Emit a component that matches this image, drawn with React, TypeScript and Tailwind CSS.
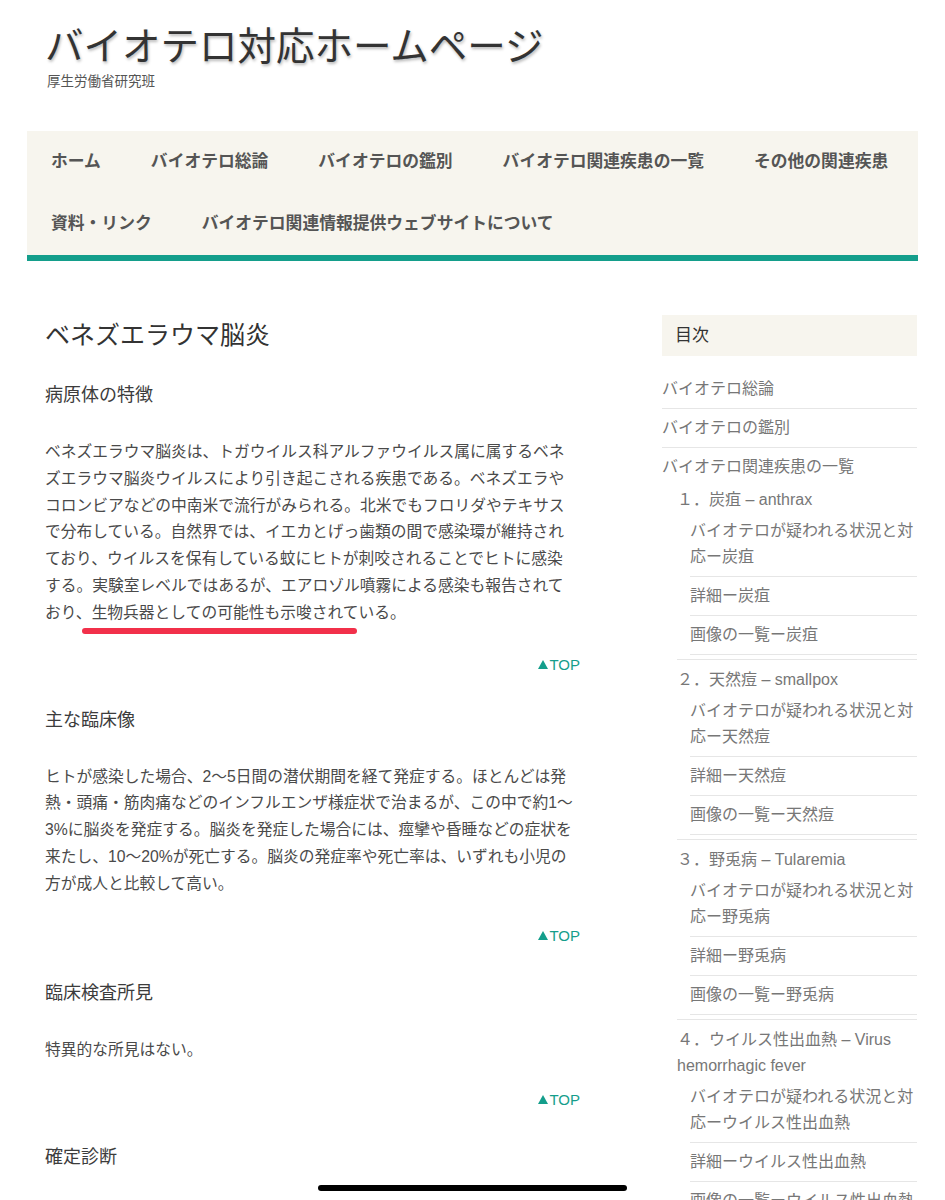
import React from "react";

const FONT = "font-['Liberation_Sans','Noto_Sans_CJK_JP',sans-serif]";

const NAV = [
  "ホーム",
  "バイオテロ総論",
  "バイオテロの鑑別",
  "バイオテロ関連疾患の一覧",
  "その他の関連疾患",
  "資料・リンク",
  "バイオテロ関連情報提供ウェブサイトについて",
];

const DISEASES = [
  { label: "１．炭疽 – anthrax", name: "炭疽" },
  { label: "２．天然痘 – smallpox", name: "天然痘" },
  { label: "３．野兎病 – Tularemia", name: "野兎病" },
  { label: "４．ウイルス性出血熱 – Virus hemorrhagic fever", name: "ウイルス性出血熱" },
  { label: "５．ボツリヌス症 – Botulism", name: "ボツリヌス症" },
  { label: "６．ペスト – Plague", name: "ペスト" },
];

const TopLink = ({ mt = "mt-[26px]" }: { mt?: string }) => (
  <div className={`${mt} flex justify-end text-[15px] leading-[24px] text-[#149e8b]`}>
    <a href="#top" className="flex items-center gap-[1px]">
      <svg width="10" height="9" viewBox="0 0 10 9" className="mb-[1px]">
        <polygon points="5,0 10,9 0,9" fill="#149e8b" />
      </svg>
      TOP
    </a>
  </div>
);

const H2 = ({ children, mt = "mt-[30px]" }: { children: React.ReactNode; mt?: string }) => (
  <h2 className={`${mt} text-[18px] leading-[28px] text-[#3c3c3c]`}>{children}</h2>
);

const P = ({ children }: { children: React.ReactNode }) => (
  <p className="mt-[30px] text-[15.75px] leading-[26.8px] text-[#4a4a4a]">{children}</p>
);

function Sidebar() {
  const item = "py-[6px] leading-[26px] border-b border-[#e6e6e6]";
  return (
    <aside className="w-[255px] shrink-0">
      <div className="bg-[#f7f5ee] h-[41px] pl-[13px] text-[17px] leading-[41px] text-[#333]">目次</div>
      <ul className="mt-[14px] text-[16px] text-[#777]">
        <li className={item}>バイオテロ総論</li>
        <li className={item}>バイオテロの鑑別</li>
        <li className={item}>
          バイオテロ関連疾患の一覧
          <ul className="pl-[15px]">
            {DISEASES.map((d) => (
              <li key={d.name} className="pt-[7px] pb-[4px] leading-[26px] border-b border-[#e6e6e6]">
                {d.label}
                <ul className="pl-[13px]">
                  <li className="pt-[5px] pb-[6px] leading-[26px] border-b border-[#e6e6e6]">
                    バイオテロが疑われる状況と対応ー{d.name}
                  </li>
                  <li className={item}>詳細ー{d.name}</li>
                  <li className={item}>画像の一覧ー{d.name}</li>
                </ul>
              </li>
            ))}
          </ul>
        </li>
        <li className={item}>その他の関連疾患</li>
      </ul>
    </aside>
  );
}

export default function App() {
  return (
    <div id="top" className={`${FONT} relative h-[1200px] overflow-hidden bg-white`}>
      <header className="pt-[24px] pl-[45px]">
        <h1 className="text-[38.5px] leading-[46px] text-[#333] [text-shadow:1px_2px_3px_rgba(0,0,0,0.28)]">
          バイオテロ対応ホームページ
        </h1>
        <p className="mt-[2px] pl-[2px] text-[13.5px] leading-[20px] text-[#555]">厚生労働省研究班</p>
      </header>

      <nav className="mx-[27px] mt-[39px] bg-[#f7f5ee] border-b-[6px] border-[#149e8b]">
        <ul className="-ml-[1px] flex flex-wrap">
          {NAV.map((n) => (
            <li key={n} className="px-[25px] py-[18px] text-[16.8px] leading-[26px] font-bold text-[#555]">
              {n}
            </li>
          ))}
        </ul>
      </nav>

      <div className="mt-[54px] flex pl-[45px] pr-[28px]">
        <main className="w-[535px] pt-[2px]">
          <h1 className="text-[25px] leading-[36px] text-[#333]">ベネズエラウマ脳炎</h1>

          <H2 mt="mt-[28px]">病原体の特徴</H2>
          <P>
            ベネズエラウマ脳炎は、トガウイルス科アルファウイルス属に属するベネ<br />
            ズエラウマ脳炎ウイルスにより引き起こされる疾患である。ベネズエラや<br />
            コロンビアなどの中南米で流行がみられる。北米でもフロリダやテキサス<br />
            で分布している。自然界では、イエカとげっ歯類の間で感染環が維持され<br />
            ており、ウイルスを保有している蚊にヒトが刺咬されることでヒトに感染<br />
            する。実験室レベルではあるが、エアロゾル噴霧による感染も報告されて<br />
            おり、
            <span className="relative after:absolute after:left-[-10px] after:right-[1px] after:bottom-[-13px] after:h-[6px] after:rounded-full after:bg-[#f2304a] after:content-['']">
              生物兵器としての可能性も示唆されて
            </span>
            いる。
          </P>
          <TopLink />

          <H2 mt="mt-[29px]">主な臨床像</H2>
          <P>
            ヒトが感染した場合、2〜5日間の潜伏期間を経て発症する。ほとんどは発<br />
            熱・頭痛・筋肉痛などのインフルエンザ様症状で治まるが、この中で約1〜<br />
            3%に脳炎を発症する。脳炎を発症した場合には、痙攣や昏睡などの症状を<br />
            来たし、10〜20%が死亡する。脳炎の発症率や死亡率は、いずれも小児の<br />
            方が成人と比較して高い。
          </P>
          <TopLink />

          <H2 mt="mt-[31px]">臨床検査所見</H2>
          <P>特異的な所見はない。</P>
          <TopLink mt="mt-[25px]" />

          <H2 mt="mt-[31px]">確定診断</H2>
          <P>
            血液や髄液からのウイルス分離、PCR法による遺伝子検出、あるいは血清<br />
            学的検査によって診断する。
          </P>
        </main>

        <div className="ml-auto">
          <Sidebar />
        </div>
      </div>

      <div className="absolute left-[318px] bottom-[9px] h-[6px] w-[309px] rounded-full bg-black" />
    </div>
  );
}
